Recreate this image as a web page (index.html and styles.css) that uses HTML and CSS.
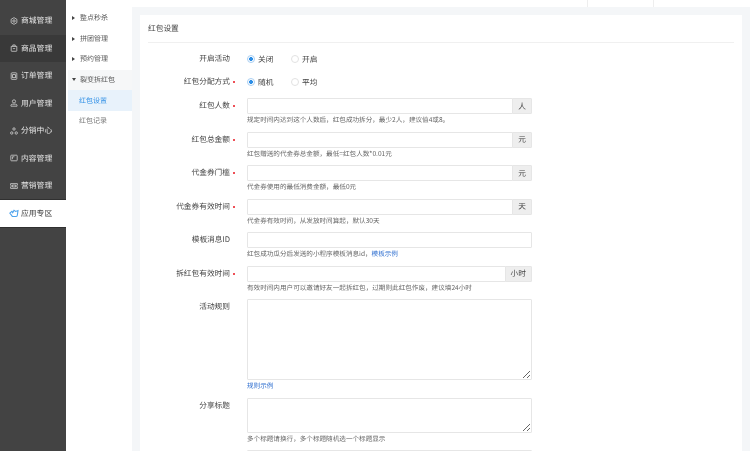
FILE: index.html
```html
<!DOCTYPE html>
<html lang="zh">
<head>
<meta charset="utf-8">
<title>红包设置</title>
<link rel="stylesheet" href="styles.css">
</head>
<body>
<div class="app">
  <nav class="side">
    <div class="nav-item"><svg class="ico" viewBox="0 0 10 10"><path d="M5 .8 8.6 2.9v4.2L5 9.2 1.4 7.1V2.900z"/><circle cx="5" cy="5" r="1.5"/></svg>商城管理</div>
    <div class="nav-item nav-dark"><svg class="ico" viewBox="0 0 10 10"><path d="M1.500 3h7v5.500a.6.6 0 0 1-.6.600H2.100a.6.600 0 0 1-.6-.6z"/><path d="M3.500 3V1.200h3V3M3.500 5c.5 1.200 2.500 1.200 3 0"/></svg>商品管理</div>
    <div class="nav-item"><svg class="ico" viewBox="0 0 10 10"><rect x="1.500" y="1" width="7" height="8.200" rx="1"/><rect x="3.300" y="3.300" width="3.400" height="3.800"/></svg>订单管理</div>
    <div class="nav-item"><svg class="ico" viewBox="0 0 10 10"><circle cx="5" cy="3" r="2"/><path d="M1.200 9V7.800c0-.8.8-1.300 1.800-1.300h4c1 0 1.800.5 1.800 1.300V9z"/></svg>用户管理</div>
    <div class="nav-item"><svg class="ico" viewBox="0 0 10 10"><circle cx="5" cy="2.500" r="1.500"/><circle cx="2.200" cy="7.500" r="1.500"/><circle cx="7.800" cy="7.500" r="1.500"/></svg>分销中心</div>
    <div class="nav-item"><svg class="ico" viewBox="0 0 10 10"><rect x="1" y="1.500" width="8" height="7" rx=".8"/><path d="M3 6.500v-3h2.500"/></svg>内容管理</div>
    <div class="nav-item"><svg class="ico" viewBox="0 0 10 10"><path d="M.8 2h8.400v2a1 1 0 0 0 0 2v2H.8V6a1 1 0 0 0 0-2z"/><rect x="3.300" y="3.800" width="3.400" height="2.400"/></svg>营销管理</div>
    <div class="nav-item nav-active"><svg class="ico ico-blue" viewBox="0 0 12 10"><path d="M1 4.500 3.500 2.500 4.500 4 6 1.200 8 2.500 10.800 1.500 10 7a1.500 1.500 0 0 1-1.500 1.500H4z"/></svg>应用专区</div>
  </nav>
  <aside class="sub">
    <div class="sub-item"><span class="tri"></span>整点秒杀</div>
    <div class="sub-item"><span class="tri"></span>拼团管理</div>
    <div class="sub-item"><span class="tri"></span>预约管理</div>
    <div class="sub-item sub-open"><span class="tri tri-down"></span>裂变拆红包</div>
    <div class="sub-item sub-child sub-cur">红包设置</div>
    <div class="sub-item sub-child">红包记录</div>
  </aside>
  <div class="main">
    <header class="top"><span class="top-cell"></span></header>
    <section class="card">
      <h2 class="card-title">红包设置</h2>
      <form class="form">
        <div class="row row-radio1">
          <label class="lab">开启活动</label>
          <div class="ctl radios"><span class="radio"><i class="dot on"></i>关闭</span><span class="radio"><i class="dot"></i>开启</span></div>
        </div>
        <div class="row row-radio2">
          <label class="lab req">红包分配方式</label>
          <div class="ctl radios"><span class="radio"><i class="dot on"></i>随机</span><span class="radio"><i class="dot"></i>平均</span></div>
        </div>
        <div class="row">
          <label class="lab req">红包人数</label>
          <div class="ctl"><div class="group"><input class="inp" type="text"><span class="addon">人</span></div><p class="help">规定时间内达到这个人数后，红包成功拆分，最少2人，建议值4或8。</p></div>
        </div>
        <div class="row">
          <label class="lab req">红包总金额</label>
          <div class="ctl"><div class="group"><input class="inp" type="text"><span class="addon">元</span></div><p class="help">红包赠送的代金券总金额，最低=红包人数*0.01元</p></div>
        </div>
        <div class="row">
          <label class="lab req">代金券门槛</label>
          <div class="ctl"><div class="group"><input class="inp" type="text"><span class="addon">元</span></div><p class="help">代金券使用的最低消费金额，最低0元</p></div>
        </div>
        <div class="row">
          <label class="lab req">代金券有效时间</label>
          <div class="ctl"><div class="group"><input class="inp" type="text"><span class="addon">天</span></div><p class="help">代金券有效时间，从发放时间算起，默认30天</p></div>
        </div>
        <div class="row">
          <label class="lab">模板消息ID</label>
          <div class="ctl"><div class="group"><input class="inp" type="text"></div><p class="help">红包成功瓜分后发送的小程序模板消息id，<a class="link">模板示例</a></p></div>
        </div>
        <div class="row">
          <label class="lab req">拆红包有效时间</label>
          <div class="ctl"><div class="group"><input class="inp" type="text"><span class="addon addon-wide">小时</span></div><p class="help">有效时间内用户可以邀请好友一起拆红包，过期则此红包作废，建议填24小时</p></div>
        </div>
        <div class="row">
          <label class="lab">活动规则</label>
          <div class="ctl"><textarea class="area area-lg"></textarea><p class="help"><a class="link">规则示例</a></p></div>
        </div>
        <div class="row">
          <label class="lab">分享标题</label>
          <div class="ctl"><textarea class="area area-sm"></textarea><p class="help">多个标题请换行，多个标题随机选一个标题显示</p></div>
        </div>
        <div class="row">
          <label class="lab"></label>
          <div class="ctl"><div class="group"><input class="inp inp-off" type="text" disabled></div></div>
        </div>
      </form>
    </section>
  </div>
</div>
</body>
</html>
```
FILE: styles.css
```css
* { box-sizing: border-box; }
html, body { margin: 0; padding: 0; height: 100%; overflow: hidden; background: #fff; }
body { font-family: "Noto Sans CJK SC", "Liberation Sans", sans-serif; color: #444; text-rendering: geometricPrecision; }
.app { display: flex; height: 451px; overflow: hidden; background: #fff; filter: blur(.3px); }

.side { width: 66px; flex: none; background: #434343; padding-top: 7px; margin-right: 2px; }
.nav-item { height: 27.5px; display: flex; align-items: center; padding-left: 10px; gap: 3px; font-size: 7.800px; color: #e4e4e4; }
.nav-dark { background: #393939; }
.nav-active { background: #fff; color: #444; padding-left: 9px; box-shadow: 0 -1px 0 #303030, 0 1px 0 #303030; }
.ico { width: 8px; height: 8px; flex: none; fill: none; stroke: #e0e0e0; stroke-width: .9; }
.ico-blue { width: 10px; height: 9px; stroke: #4ea3ec; stroke-width: 1.300; margin-right: -1px; }

.sub { width: 64px; flex: none; background: #fff; padding-top: 7.500px; }
.sub-item { height: 20.700px; display: flex; align-items: center; font-size: 7px; color: #555; padding-left: 4px; }
.tri { width: 0; height: 0; margin-right: 5px; border-left: 3px solid #444; border-top: 2px solid transparent; border-bottom: 2px solid transparent; }
.tri-down { border-top: 3px solid #444; border-left: 2px solid transparent; border-right: 2px solid transparent; border-bottom: 0; margin-right: 4px; }
.sub-open { background: #f6f7f8; }
.sub-child { padding-left: 11px; color: #777; }
.sub-cur { background: #e8f2fb; color: #2f8fe6; }

.main { flex: 1; min-width: 0; padding-left: 8px; background: #f4f6f8; }
.top { height: 7px; margin-left: -8px; background: #fff; display: flex; justify-content: flex-end; padding-right: 96px; }
.top-cell { width: 67px; border-left: 1px solid #eee; border-right: 1px solid #eee; }
.card { background: #fff; margin: 8px 8px 0 0; padding: 0 8px; height: 440px; }
.card-title { margin: 0; height: 28px; font-size: 7.700px; font-weight: 400; color: #444; line-height: 28px; border-bottom: 1px solid #f0f0f0; }

.form { padding-top: 8px; }
.row { display: flex; margin-bottom: 6.500px; }
.row-radio1 { height: 16px; margin-bottom: 7px; }
.row-radio2 { height: 16px; margin-bottom: 8px; }
.lab { width: 82px; flex: none; text-align: right; font-size: 7.700px; line-height: 16px; color: #444; position: relative; }
.req::after { content: ""; position: absolute; right: -5px; top: 7px; width: 2px; height: 2px; border-radius: 50%; background: #e8141e; }
.ctl { margin-left: 17px; width: 285px; font-size: 7.500px; }
.radios { display: flex; align-items: center; }
.radio { display: flex; align-items: center; width: 44px; gap: 3px; font-size: 7.700px; color: #444; }
.dot { width: 8px; height: 8px; border-radius: 50%; border: 1px solid #e2e2e2; background: #fff; flex: none; }
.dot.on { border-color: #a9cff3; background: radial-gradient(circle, #2d8ee6 0 1.700px, #fff 2.200px); }
.group { display: flex; height: 16px; }
.inp { flex: 1; min-width: 0; height: 16px; border: 1px solid #e6e6e6; border-radius: 1px; padding: 0 4px; background: #fff; outline: none; }
.inp-off { background: #eee; }
.addon { width: 20px; flex: none; margin-left: -1px; border: 1px solid #e6e6e6; border-radius: 0 1px 1px 0; background: #eee; font-size: 7.700px; color: #444; display: flex; align-items: center; justify-content: center; }
.addon-wide { width: 27.500px; }
.help { margin: 0; height: 11px; font-size: 6.600px; line-height: 11px; color: #666; white-space: nowrap; }
.link { color: #2f6fd0; }
.area { display: block; width: 285px; border: 1px solid #e6e6e6; border-radius: 1px; padding: 2px 4px; background: #fff; outline: none; margin: 0; }
.area-lg { height: 81px; }
.area-sm { height: 35px; }
```
